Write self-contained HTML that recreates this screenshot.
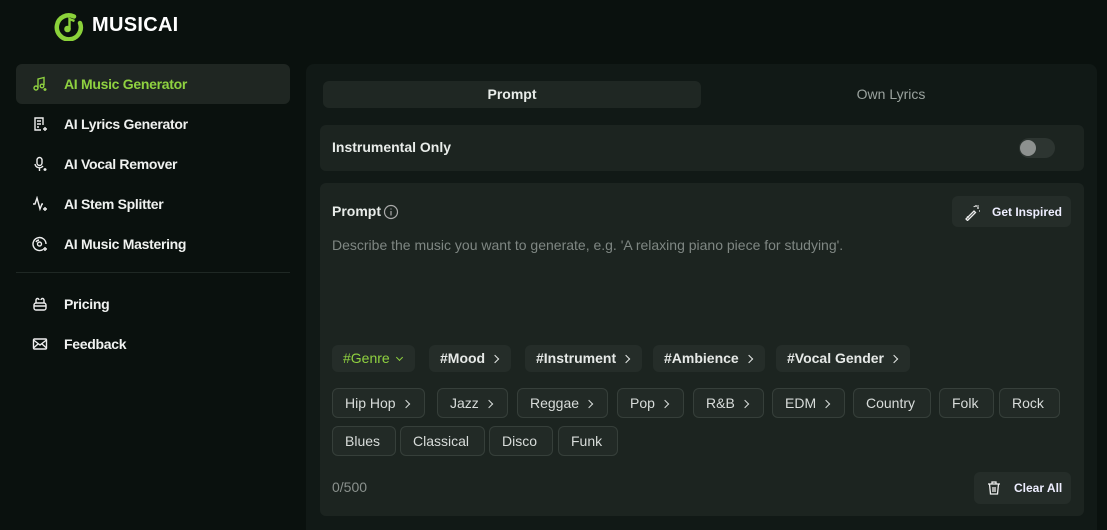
<!DOCTYPE html>
<html style="overflow:hidden;width:1107px;height:530px"><head><meta charset="utf-8"><style>
*{box-sizing:border-box;margin:0;padding:0}
body{width:1107px;height:530px;overflow:hidden;background:#0a110e;font-family:"Liberation Sans",sans-serif;color:#e8ece9;position:relative}
.abs{position:absolute}
.logo{left:54px;top:11px}
.brand{left:92px;top:14px;font-size:20px;font-weight:bold;color:#fff;letter-spacing:0.3px}
.nav{left:16px;width:274px;height:40px;font-size:14px;font-weight:bold;display:flex;align-items:center;padding-left:48px;color:#f0f2f0;letter-spacing:-0.3px}
.nav.act{background:#1f2622;border-radius:6px;color:#8fd140}
.nav svg{position:absolute;left:16px;top:12px}
.sep{left:16px;top:272px;width:274px;height:1px;background:#1f2824}
.panel{left:306px;top:64px;width:791px;height:466px;background:#111916;border-radius:8px 8px 0 0}
.tab{left:323px;top:81px;width:378px;height:27px;background:#1f2723;border-radius:6px;font-size:14px;font-weight:bold;text-align:center;line-height:27px}
.tab2{left:701px;top:81px;width:380px;height:27px;font-size:14px;color:#9aa29e;text-align:center;line-height:27px}
.card{background:#1c2420;border-radius:6px;left:320px;width:764px}
.chip{position:absolute;height:27px;background:#252d29;border-radius:6px;font-size:14px;font-weight:bold;line-height:27px;padding:0 13px 0 11px;color:#e6e9e7}
.g{height:30px;line-height:28px;border:1px solid #363f3a;background:#222a26;font-weight:normal;color:#d8dcda;padding:0 15px 0 12px}
.ch{display:inline-block;margin-left:7px;width:6px;height:6px;border-top:1.5px solid currentColor;border-right:1.5px solid currentColor;transform:rotate(45deg);position:relative;top:-1px}
.btn{position:absolute;background:#252d29;border-radius:6px;font-size:12px;font-weight:bold;color:#eef;display:flex;align-items:center}
</style></head><body>
<svg class="abs logo" width="30" height="30" viewBox="0 0 30 30"><path d="M20 5.5A12 12 0 1 0 26 12" fill="none" stroke="#8bd23a" stroke-width="4.5" stroke-linecap="round"/><circle cx="13.5" cy="18" r="3.3" fill="#8bd23a"/><path d="M15.5 18V8l5 2" fill="none" stroke="#8bd23a" stroke-width="2.4"/></svg>
<div class="abs brand">MUSICAI</div>

<div class="abs nav act" style="top:64px"><svg width="16" height="16" viewBox="0 0 16 16" fill="none" stroke="#8fd140" stroke-width="1.4"><circle cx="4" cy="12" r="2"/><path d="M6 12V3l6-1.5V9"/><circle cx="10" cy="10" r="1.8"/><path d="M13 12v3M11.5 13.5h3"/></svg>AI Music Generator</div>
<div class="abs nav" style="top:104px"><svg width="16" height="16" viewBox="0 0 16 16" fill="none" stroke="#eee" stroke-width="1.4"><path d="M11 9V2H3v12h6"/><path d="M5 5h4M5 8h4M5 11h2M13 11v4M11 13h4"/></svg>AI Lyrics Generator</div>
<div class="abs nav" style="top:144px"><svg width="16" height="16" viewBox="0 0 16 16" fill="none" stroke="#eee" stroke-width="1.4"><rect x="5" y="1.5" width="5" height="8" rx="2.5"/><path d="M3 8a4.5 4.5 0 0 0 8 2M7.5 12.5V15M13 12v3M11.5 13.5h3"/></svg>AI Vocal Remover</div>
<div class="abs nav" style="top:184px"><svg width="16" height="16" viewBox="0 0 16 16" fill="none" stroke="#eee" stroke-width="1.4"><path d="M1 8h2l2-6 3 11 2-5h1M13 11v4M11 13h4"/></svg>AI Stem Splitter</div>
<div class="abs nav" style="top:224px"><svg width="16" height="16" viewBox="0 0 16 16" fill="none" stroke="#eee" stroke-width="1.4"><path d="M11 13.5A6.5 6.5 0 1 1 14 8"/><circle cx="7.5" cy="8" r="2"/><path d="M4 6a4 4 0 0 1 3-2M13 11v4M11 13h4"/></svg>AI Music Mastering</div>
<div class="abs sep"></div>
<div class="abs nav" style="top:284px"><svg width="16" height="16" viewBox="0 0 16 16" fill="none" stroke="#eee" stroke-width="1.4"><rect x="2" y="7" width="12" height="7" rx="2"/><path d="M4 7V4a1.5 1.5 0 0 1 3 0M9 4a1.5 1.5 0 0 1 3 0v3M2 10h12"/></svg>Pricing</div>
<div class="abs nav" style="top:324px"><svg width="16" height="16" viewBox="0 0 16 16" fill="none" stroke="#eee" stroke-width="1.4"><rect x="1.5" y="3" width="13" height="10" rx="1"/><path d="M1.5 4l6.5 5 6.5-5M1.5 12l4.5-4M14.5 12L10 8"/></svg>Feedback</div>

<div class="abs panel"></div>
<div class="abs tab">Prompt</div>
<div class="abs tab2">Own Lyrics</div>

<div class="abs card" style="top:125px;height:46px"></div>
<div class="abs" style="left:332px;top:139px;font-size:14px;font-weight:bold">Instrumental Only</div>
<div class="abs" style="left:1019px;top:138px;width:36px;height:20px;border-radius:10px;background:#2d3531"></div>
<div class="abs" style="left:1020px;top:140px;width:16px;height:16px;border-radius:8px;background:#8d918f"></div>

<div class="abs card" style="top:183px;height:333px"></div>
<div class="abs" style="left:332px;top:203px;font-size:14px;font-weight:bold">Prompt</div>
<svg class="abs" style="left:383px;top:204px" width="16" height="16" viewBox="0 0 16 16" fill="none" stroke="#aaa" stroke-width="1.2"><circle cx="8" cy="8" r="6.5"/><path d="M8 7v4.5M8 4.5v1"/></svg>
<div class="btn" style="left:952px;top:196px;width:119px;height:31px;padding-left:12px"><svg width="18" height="18" viewBox="0 0 18 18" fill="none" stroke="#eee" stroke-width="1.3"><path d="M2 16l8-8 1.5 1.5-8 8zM3 13.5l1.5 1.5"/><path d="M12 2v2M15 5h-2M14.5 2.5l-1 1M16 8h-1M10 3l.5 1"/></svg><span style="margin-left:10px">Get Inspired</span></div>
<div class="abs" style="left:332px;top:237px;font-size:14px;color:#7f8783">Describe the music you want to generate, e.g. 'A relaxing piano piece for studying'.</div>

<div class="chip" style="left:332px;top:345px;color:#8fd140;font-weight:normal">#Genre<span class="ch" style="transform:rotate(135deg);width:5px;height:5px;top:-3px"></span></div>
<div class="chip" style="left:429px;top:345px">#Mood<span class="ch"></span></div>
<div class="chip" style="left:525px;top:345px">#Instrument<span class="ch"></span></div>
<div class="chip" style="left:653px;top:345px">#Ambience<span class="ch"></span></div>
<div class="chip" style="left:776px;top:345px">#Vocal Gender<span class="ch"></span></div>

<div class="chip g" style="left:332px;top:388px">Hip Hop<span class="ch"></span></div>
<div class="chip g" style="left:437px;top:388px">Jazz<span class="ch"></span></div>
<div class="chip g" style="left:517px;top:388px">Reggae<span class="ch"></span></div>
<div class="chip g" style="left:617px;top:388px">Pop<span class="ch"></span></div>
<div class="chip g" style="left:693px;top:388px">R&amp;B<span class="ch"></span></div>
<div class="chip g" style="left:772px;top:388px">EDM<span class="ch"></span></div>
<div class="chip g" style="left:853px;top:388px">Country</div>
<div class="chip g" style="left:939px;top:388px">Folk</div>
<div class="chip g" style="left:999px;top:388px">Rock</div>
<div class="chip g" style="left:332px;top:426px">Blues</div>
<div class="chip g" style="left:400px;top:426px">Classical</div>
<div class="chip g" style="left:489px;top:426px">Disco</div>
<div class="chip g" style="left:558px;top:426px">Funk</div>

<div class="abs" style="left:332px;top:479px;font-size:14px;color:#8a918d">0/500</div>
<div class="btn" style="left:974px;top:472px;width:97px;height:32px;padding-left:12px"><svg width="16" height="16" viewBox="0 0 16 16" fill="none" stroke="#eee" stroke-width="1.3"><path d="M2 4h12M6 4V2h4v2M3.5 4l1 10h7l1-10M7 7v5M9 7v5"/></svg><span style="margin-left:12px">Clear All</span></div>
</body></html>
